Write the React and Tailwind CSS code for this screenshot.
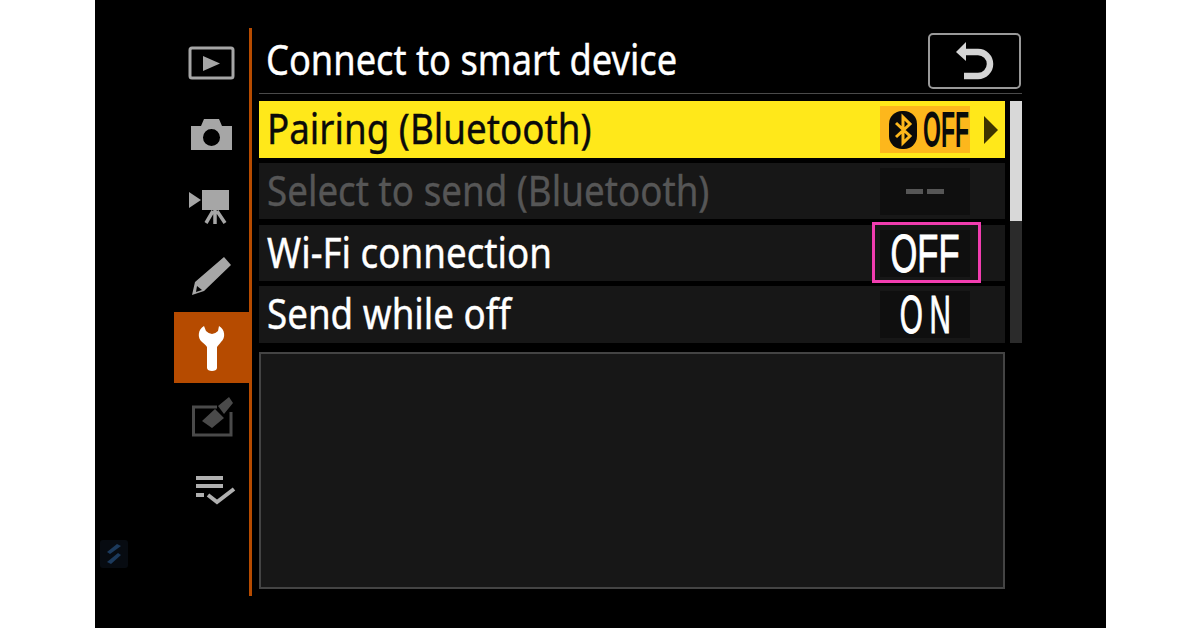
const items = [
  {
    id: 'play',
    y: 28,
    art: (
      <>
        <rect x="190" y="48" width="43" height="30" rx="2" fill="none" stroke="#a6a6a6" strokeWidth="3" />
        <path d="M203 56 L220 63.5 L203 71 Z" fill="#a6a6a6" />
      </>
    ),
  },
  {
    id: 'camera',
    y: 99,
    art: (
      <path
        fillRule="evenodd"
        d="M191 126 H201 L204 119 H219 L222 126 H232 V150 H191 Z M211.500 129 A8.500 8.500 0 1 0 211.500 146 A8.500 8.500 0 1 0 211.500 129 Z"
        fill="#a6a6a6"
      />
    ),
  },
  {
    id: 'movie',
    y: 170,
    art: (
      <>
        <path d="M189 192 L201 200 L189 208 Z M202 190 H229 V210 H202 Z" fill="#a6a6a6" />
        <path d="M215 210 V224 M213 211 L206 223 M217 211 L225 223" stroke="#a6a6a6" strokeWidth="3.500" fill="none" />
      </>
    ),
  },
  {
    id: 'pencil',
    y: 241,
    art: (
      <path
        fillRule="evenodd"
        d="M192 295 L195 282 L224 257 L231 265 L204 291 Z M197 286 L196 292 L202 290 Z"
        fill="#a6a6a6"
      />
    ),
  },
  {
    id: 'setup',
    y: 312,
    active: true,
    art: (
      <path
        d="M204 326 C198 329 197 338 202 342 C204 344 206 345 207 347 L207 368 C207 372 217 372 217 368 L217 347 C218 345 220 344 221 342 C226 338 225 329 219 326 L218 331 Q212 337 206 331 Z"
        fill="#fff"
      />
    ),
  },
  {
    id: 'retouch',
    y: 383,
    art: (
      <>
        <path d="M217 407 H193.500 V435 H231 V412" fill="none" stroke="#4a4a4a" strokeWidth="3" />
        <path d="M202 421 L215 409 L224 418 L212 428 Z M218 406 L229 397 L233 403 L224 414 Z" fill="#4a4a4a" />
      </>
    ),
  },
  {
    id: 'mymenu',
    y: 454,
    art: (
      <>
        <path d="M196 478 H223 M196 486 H223 M196 495 H204" stroke="#b0b0b0" strokeWidth="4" fill="none" />
        <path d="M208 495 L217 502 L234 489" stroke="#b0b0b0" strokeWidth="4" fill="none" />
      </>
    ),
  },
]

const rows = [
  { label: 'Pairing (Bluetooth)', value: 'OFF', selected: true, h: 'h-[57px]' },
  { label: 'Select to send (Bluetooth)', value: '--', disabled: true, h: 'h-[56px]' },
  { label: 'Wi-Fi connection', value: 'OFF', marked: true, h: 'h-[56px]' },
  { label: 'Send while off', value: 'ON', h: 'h-[57px]' },
]

function BluetoothBadge() {
  return (
    <svg width="30" height="40" viewBox="0 0 30 40" className="shrink-0">
      <rect x="1" y="1" width="28" height="38" rx="13" fill="#0a0a0a" />
      <path d="M8 13 L22 26 L15 33 V7 L22 14 L8 27" fill="none" stroke="#fdb71c" strokeWidth="3" />
    </svg>
  )
}

function Value({ row }) {
  if (row.disabled) {
    return (
      <div className="flex gap-[4px]">
        <span className="h-[5px] w-[17px] bg-[#565656]" />
        <span className="h-[5px] w-[17px] bg-[#565656]" />
      </div>
    )
  }
  if (row.selected) {
    return (
      <div className="ml-[5px] flex w-[45px] justify-center">
        <span className="shrink-0 scale-x-[0.46] font-['Liberation_Sans',sans-serif] text-[50px] leading-none font-bold">{row.value}</span>
      </div>
    )
  }
  return (
    <div className="flex w-[90px] justify-center">
      <span
        className={`shrink-0 font-['Liberation_Sans',sans-serif] text-[53px] leading-none [-webkit-text-stroke:1px_currentColor] ${
          row.value === 'ON' ? 'ml-[8px] scale-x-[0.56] tracking-[12px]' : 'scale-x-[0.65]'
        }`}
      >
        {row.value}
      </span>
    </div>
  )
}

function Row({ row }) {
  let rowClass = 'bg-[#171717] text-white'
  if (row.selected) rowClass = 'bg-[#ffe81a] text-[#0a0a0a]'
  if (row.disabled) rowClass = 'bg-[#171717] text-[#565656]'

  return (
    <div className={`relative flex items-center justify-between ${row.h} ${rowClass}`}>
      <span className="mb-[3px] ml-[8px] origin-left scale-x-[0.875] whitespace-nowrap text-[42px] leading-none [-webkit-text-stroke:0.4px_currentColor]">{row.label}</span>
      <div className="flex items-center">
        <div className={`flex h-[47px] w-[90px] items-center ${row.selected ? 'bg-[#fdb71c] pl-[8px]' : 'justify-center bg-[#0f0f0f]'}`}>
          {row.selected && <BluetoothBadge />}
          <Value row={row} />
        </div>
        <div className="flex w-[35px] items-center pl-[14px]">
          {row.selected && (
            <svg width="14" height="28" viewBox="0 0 14 28">
              <path d="M0 0 L14 14 L0 28 Z" fill="#3d3400" />
            </svg>
          )}
        </div>
      </div>
      {row.marked && <div className="absolute left-[613px] top-[-3px] h-[61px] w-[109px] border-[3px] border-[#f23db0]" />}
    </div>
  )
}

export default function App() {
  return (
    <div className="h-[628px] w-[1200px] overflow-hidden bg-white font-['Noto_Sans',sans-serif]">
      <div className="relative ml-[95px] h-[628px] w-[1011px] bg-black pt-[28px]">
        <div className="flex">
          <div className="flex h-[568px] w-[157px] flex-col border-r-[3px] border-[#b64b00] pl-[79px]">
            {items.map((item) => (
              <div key={item.id} className={`h-[71px] w-[75px] ${item.active ? 'bg-[#b64b00]' : ''}`}>
                <svg width="75" height="71" viewBox={`174 ${item.y} 75 71`}>
                  {item.art}
                </svg>
              </div>
            ))}
          </div>

          <div className="ml-[7px] w-[763px]">
            <div className="flex h-[66px] items-center justify-between border-b border-[#4a4a4a]">
              <h1 className="mb-[4px] ml-[7px] origin-left scale-x-[0.863] whitespace-nowrap text-[42px] leading-none font-normal text-white [-webkit-text-stroke:0.4px_currentColor]">
                Connect to smart device
              </h1>
              <div className="mr-px flex h-[56px] w-[93px] items-center justify-center rounded-[5px] border-2 border-[#999]">
                <svg width="38" height="38" viewBox="0 0 38 38">
                  <path d="M10 0 L0 10 L10 19 Z" fill="#d4d4d4" />
                  <path d="M8 10 H22 A12 12 0 0 1 22 34 H8" fill="none" stroke="#d4d4d4" strokeWidth="6.500" />
                </svg>
              </div>
            </div>

            <div className="mt-[7px] flex justify-between">
              <div className="flex w-[746px] flex-col">
                <Row row={rows[0]} />
                <div className="h-[5px]" />
                <Row row={rows[1]} />
                <div className="h-[6px]" />
                <Row row={rows[2]} />
                <div className="h-[5px]" />
                <Row row={rows[3]} />
              </div>
              <div className="h-[242px] w-[12px] bg-[#2b2b2b]">
                <div className="h-[120px] bg-[#d8d8d8]" />
              </div>
            </div>

            <div className="mt-[9px] h-[237px] w-[746px] border-2 border-[#444] bg-[#171717]" />
          </div>
        </div>

        <div className="absolute left-[5px] top-[540px] flex h-[28px] w-[28px] items-center justify-center rounded-[3px] bg-[#070b11]">
          <svg width="16" height="20" viewBox="0 0 16 20">
            <path d="M11 0 L15 2 L4 10 L1 8 Z" fill="#1c3a5c" />
            <path d="M12 9 L15 11 L5 20 L1 18 Z" fill="#1c3a5c" />
          </svg>
        </div>
      </div>
    </div>
  )
}
